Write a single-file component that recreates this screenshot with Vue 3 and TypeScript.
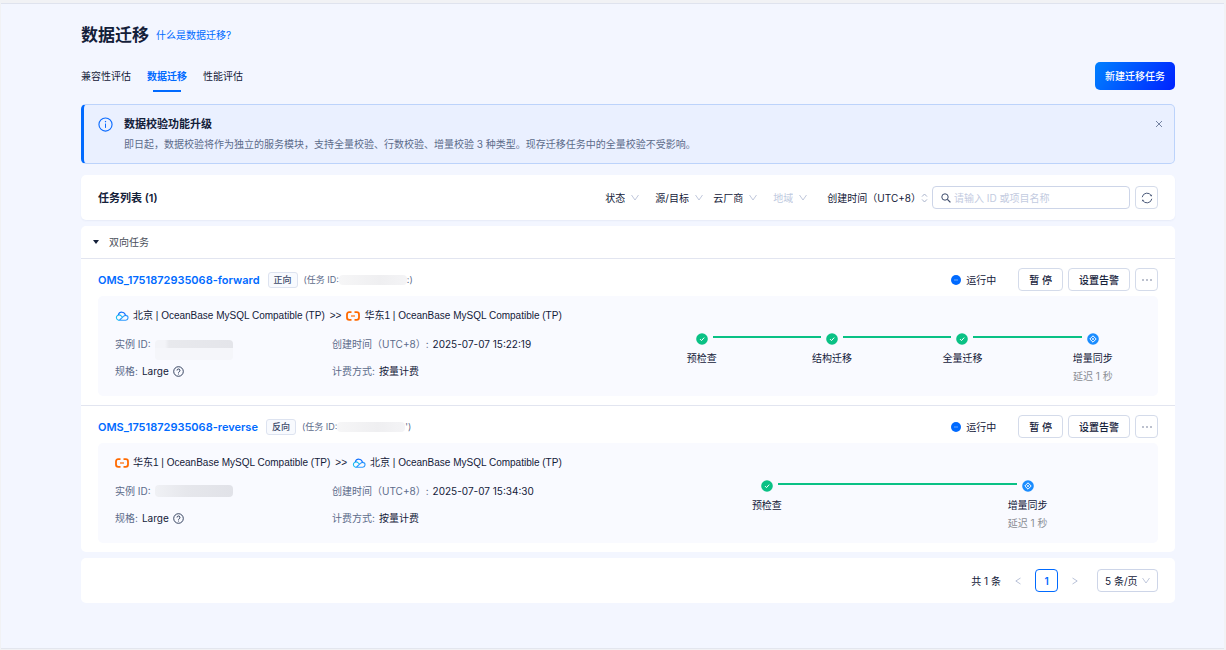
<script setup lang="ts">
import { ref } from 'vue'

interface Step {
  label: string
  done: boolean
  note?: string
}

interface Endpoint {
  cloud: 'tencent' | 'aliyun'
  text: string
}

interface Task {
  name: string
  tag: string
  idTail: string
  maskClass: string
  route: Endpoint[]
  created: string
  steps: Step[]
}

const beijing: Endpoint = { cloud: 'tencent', text: '北京 | OceanBase MySQL Compatible (TP)' }
const huadong: Endpoint = { cloud: 'aliyun', text: '华东1 | OceanBase MySQL Compatible (TP)' }

const tabs = ['兼容性评估', '数据迁移', '性能评估']
const activeTab = ref('数据迁移')
const keyword = ref('')

const filters = [
  { label: '状态', gap: '', disabled: false },
  { label: '源/目标', gap: 'tight', disabled: false },
  { label: '云厂商', gap: '', disabled: false },
  { label: '地域', gap: 'wide', disabled: true },
]

const tasks: Task[] = [
  {
    name: 'OMS_1751872935068-forward',
    tag: '正向',
    idTail: ':)',
    maskClass: 'two-line',
    route: [beijing, huadong],
    created: '2025-07-07 15:22:19',
    steps: [
      { label: '预检查', done: true },
      { label: '结构迁移', done: true },
      { label: '全量迁移', done: true },
      { label: '增量同步', done: false, note: '延迟 1 秒' },
    ],
  },
  {
    name: 'OMS_1751872935068-reverse',
    tag: '反向',
    idTail: '\')',
    maskClass: 'one-line',
    route: [huadong, beijing],
    created: '2025-07-07 15:34:30',
    steps: [
      { label: '预检查', done: true },
      { label: '增量同步', done: false, note: '延迟 1 秒' },
    ],
  },
]
</script>

<template>
  <div class="frame">
    <main class="page">
      <header class="heading">
        <h1>数据迁移</h1>
        <a href="#about">什么是数据迁移?</a>
      </header>

      <div class="tabbar">
        <nav class="tabs">
          <button
            v-for="tab in tabs"
            :key="tab"
            type="button"
            class="tab"
            :class="{ active: tab === activeTab }"
            @click="activeTab = tab"
          >{{ tab }}</button>
        </nav>
        <button type="button" class="primary">新建迁移任务</button>
      </div>

      <section class="notice">
        <svg class="notice-icon" viewBox="0 0 16 16" width="15" height="15" fill="none" stroke="#0b6bff">
          <circle cx="8" cy="8" r="7" stroke-width="1.2" />
          <path d="M8 7v4.6" stroke-width="1.1" />
          <path d="M8 4.2v1.4" stroke-width="1.3" />
        </svg>
        <div class="notice-body">
          <h2>数据校验功能升级</h2>
          <p>即日起，数据校验将作为独立的服务模块，支持全量校验、行数校验、增量校验 3 种类型。现存迁移任务中的全量校验不受影响。</p>
        </div>
        <button type="button" class="close" aria-label="关闭">
          <svg viewBox="0 0 8 8" width="8" height="8" fill="none" stroke="#7584a3"><path d="M1 1l6 6M7 1L1 7" /></svg>
        </button>
      </section>

      <section class="card toolbar">
        <h2>任务列表 (1)</h2>
        <div class="filters">
          <span v-for="f in filters" :key="f.label" class="filter" :class="[f.gap, { disabled: f.disabled }]">
            <select :aria-label="f.label" :disabled="f.disabled"><option>{{ f.label }}</option></select>
            <svg viewBox="0 0 8 7" width="8" height="7" fill="none" stroke="currentColor" stroke-width=".9"><path d="M.5 1L4 6l3.500-5" /></svg>
          </span>
          <button type="button" class="sort">
            <span>创建时间（UTC+8）</span>
            <svg viewBox="0 0 7 10" width="7" height="10" fill="none" stroke="#aab4cc"><path d="M1 3.6L3.5 1 6 3.6M1 6.4L3.5 9 6 6.4" /></svg>
          </button>
        </div>
        <label class="search">
          <svg viewBox="0 0 10 10" width="10" height="10" fill="none" stroke="#3d4b6b"><circle cx="4" cy="4" r="3.2" /><path d="M6.4 6.4L9.4 9.4" stroke-width="1.3" /></svg>
          <input v-model="keyword" type="text" aria-label="搜索任务" placeholder="请输入 ID 或项目名称" />
        </label>
        <button type="button" class="square refresh" aria-label="刷新">
          <svg viewBox="0 0 12 12" width="12" height="12" fill="none" stroke="#4b5a7a">
            <path d="M1.2 5.2a4.9 4.9 0 0 1 9.2-1.4M10.8 6.8a4.9 4.9 0 0 1-9.2 1.4" />
            <path d="M11.2 2.4l-.6 2-1.9-.6zM.8 9.6l.6-2 1.9.6z" fill="#4b5a7a" stroke="none" />
          </svg>
        </button>
      </section>

      <section class="card">
        <button type="button" class="group">
          <svg viewBox="0 0 6 4" width="6" height="4"><path d="M0 0h6L3 4z" fill="#132039" /></svg>
          <span>双向任务</span>
        </button>

        <article v-for="task in tasks" :key="task.name" class="task">
          <header class="task-head">
            <a href="#task" class="task-name">{{ task.name }}</a>
            <span class="tag">{{ task.tag }}</span>
            <span class="task-id">(任务 ID:<i class="mask id-mask"></i>{{ task.idTail }}</span>
            <span class="status">
              <svg viewBox="0 0 10 10" width="10" height="10"><circle cx="5" cy="5" r="5" fill="#006aff" /><path d="M3 5h4" stroke="#6fabff" /></svg>
              运行中
            </span>
            <button type="button" class="plain">暂 停</button>
            <button type="button" class="plain">设置告警</button>
            <button type="button" class="square" aria-label="更多">
              <svg viewBox="0 0 10 2" width="10" height="2" fill="#66738f"><circle cx="1" cy="1" r=".8" /><circle cx="5" cy="1" r=".8" /><circle cx="9" cy="1" r=".8" /></svg>
            </button>
          </header>

          <div class="panel">
            <div class="details">
              <div class="route">
                <template v-for="(end, i) in task.route" :key="end.cloud">
                  <span v-if="i > 0" class="arrow">&gt;&gt;</span>
                  <svg v-if="end.cloud === 'tencent'" viewBox="0 0 28 20" width="14" height="10" fill="none" stroke-width="2.2" stroke-linecap="round">
                    <path d="M8 18.4h13.5a4.9 4.9 0 0 0 .6-9.7c-1.800-.2-3.300.5-4.600 1.700L9.200 18" stroke="#2e9bff" />
                    <path d="M8 18.400a5.300 5.300 0 1 1 3.800-9.100l2.700 2.500" stroke="#16bdf0" />
                    <path d="M6.600 7.600a7.300 7.300 0 0 1 14.200.8" stroke="#1373ff" />
                  </svg>
                  <svg v-else viewBox="0 0 28 20" width="14" height="10" fill="none" stroke="#ff6a00">
                    <path d="M11 2.400H6.500Q2 2.400 2 7v6q0 4.600 4.500 4.600H11M17 2.400h4.500Q26 2.400 26 7v6q0 4.600-4.500 4.600H17" stroke-width="3.600" />
                    <path d="M10 10h8" stroke-width="2.400" />
                  </svg>
                  <span>{{ end.text }}</span>
                </template>
              </div>
              <dl class="facts">
                <div class="fact"><dt>实例 ID:</dt><dd><i class="mask instance-mask" :class="task.maskClass"></i></dd></div>
                <div class="fact"><dt>创建时间（UTC+8）:</dt><dd>{{ task.created }}</dd></div>
                <div class="fact">
                  <dt>规格:</dt>
                  <dd>
                    Large
                    <svg viewBox="0 0 11 11" width="11" height="11" fill="none" stroke="#233150">
                      <circle cx="5.500" cy="5.500" r="4.800" stroke-width=".9" />
                      <path d="M4 4.500a1.500 1.500 0 1 1 2.200 1.300c-.5.300-.7.500-.7 1M5.500 7.600v.9" stroke-width=".9" />
                    </svg>
                  </dd>
                </div>
                <div class="fact"><dt>计费方式:</dt><dd>按量计费</dd></div>
              </dl>
            </div>

            <ol class="steps">
              <li v-for="step in task.steps" :key="step.label" class="step">
                <svg v-if="step.done" viewBox="0 0 12 12" width="12" height="12" fill="none"><circle cx="6" cy="6" r="5.800" fill="#0ac185" /><path d="M4 6.100l1.500 1.500L8.200 4.600" stroke="#fff" stroke-width="1" /></svg>
                <svg v-else viewBox="0 0 12 12" width="12" height="12" fill="none">
                  <circle cx="6" cy="6" r="5.800" fill="#1a8cff" />
                  <path d="M6 2.800L9.200 6 6 9.200 2.800 6z" stroke="#fff" stroke-width="1" />
                  <circle cx="6" cy="6" r=".9" fill="#fff" />
                </svg>
                <span class="step-label">{{ step.label }}</span>
                <span v-if="step.note" class="step-note">{{ step.note }}</span>
              </li>
            </ol>
          </div>
        </article>
      </section>

      <footer class="card pager">
        <span class="total">共 1 条</span>
        <button type="button" class="turn" aria-label="上一页"><svg viewBox="0 0 6 8" width="6" height="8" fill="none" stroke="#b9c2d8"><path d="M5.500 1L.8 4l4.700 3" /></svg></button>
        <button type="button" class="current">1</button>
        <button type="button" class="turn" aria-label="下一页"><svg viewBox="0 0 6 8" width="6" height="8" fill="none" stroke="#b9c2d8"><path d="M.5 1l4.700 3L.5 7" /></svg></button>
        <span class="page-size">
          <select aria-label="每页条数"><option>5 条/页</option></select>
          <svg viewBox="0 0 8 7" width="8" height="7" fill="none" stroke="#b9c2d8" stroke-width=".9"><path d="M.5 1L4 6l3.500-5" /></svg>
        </span>
      </footer>
    </main>
  </div>
</template>

<style>
body {
  margin: 0;
}
</style>

<style scoped>
.frame {
  box-sizing: border-box;
  min-height: 100vh;
  display: flex;
  padding: 3px 2px 1px 1px;
  background: #f1f2f5;
  color: #132039;
  font-family: Inter, "Noto Sans CJK SC", sans-serif;
  font-size: 10px;
  line-height: 16px;
}

.page {
  flex: 1;
  min-width: 0;
  box-sizing: border-box;
  padding: 18px 49px 40px 80px;
  border-top: 1px solid #dfe3ee;
  border-bottom: 1px solid #e3e6ee;
  background: #f3f6ff;
}

h1,
h2,
p,
dl,
dd,
ol {
  margin: 0;
  padding: 0;
}

button,
input,
select {
  box-sizing: border-box;
  margin: 0;
  padding: 0;
  border: 0;
  background: none;
  color: inherit;
  font: inherit;
  appearance: none;
  outline: none;
}

button {
  cursor: pointer;
}

a {
  color: #006aff;
  text-decoration: none;
}

svg {
  display: block;
  flex: none;
}

.heading {
  display: flex;
  align-items: center;
  gap: 7px;
  height: 26px;
}

.heading h1 {
  font-size: 17px;
  line-height: 26px;
  font-weight: 600;
}

.tabbar {
  display: flex;
  justify-content: space-between;
  align-items: center;
  height: 28px;
  margin: 14px 0;
}

.tabs {
  display: flex;
  gap: 16px;
}

.tab {
  position: relative;
  height: 28px;
}

.tab.active {
  color: #006aff;
  font-weight: 700;
}

.tab.active::after {
  content: "";
  position: absolute;
  right: 6px;
  bottom: -2px;
  left: 6px;
  height: 2px;
  background: #006aff;
}

.primary {
  height: 28px;
  padding: 0 10px;
  border-radius: 5px;
  background: linear-gradient(120deg, #0080ff, #0022ff);
  color: #fff;
  font-weight: 500;
}

.notice {
  display: flex;
  align-items: flex-start;
  padding: 11px 11px 11px 14px;
  border: 1px solid #bcd3fb;
  border-left: 3px solid #006aff;
  border-radius: 5px;
  background: #eaf0ff;
}

.notice-icon {
  margin-top: 1px;
}

.notice-body {
  flex: 1;
  margin-left: 11px;
  color: #5c6b8a;
}

.notice-body h2 {
  margin-bottom: 4px;
  color: #132039;
  font-size: 11px;
  line-height: 16px;
  font-weight: 600;
}

.close {
  padding: 4px 0;
}

.card {
  margin-top: 6px;
  border-radius: 5px;
  background: #fff;
}

.toolbar {
  display: flex;
  align-items: center;
  height: 45px;
  box-sizing: border-box;
  margin-top: 11px;
  padding: 0 17px;
  box-shadow: 0 1px 2px rgba(40, 70, 140, 0.06);
}

.toolbar h2 {
  flex: 1;
  font-size: 11px;
  font-weight: 600;
}

.filters {
  display: flex;
  align-items: center;
}

.filter {
  display: flex;
  align-items: center;
  gap: 6px;
  margin-right: 16px;
}

.filter.tight {
  margin-right: 10px;
}

.filter.wide {
  margin-right: 20px;
}

.filter svg {
  color: #b9c2d8;
}

.filter.disabled,
.filter select:disabled {
  color: #c0cae0;
  opacity: 1;
}

.sort {
  display: flex;
  align-items: center;
}

.search {
  display: flex;
  align-items: center;
  gap: 3px;
  width: 198px;
  height: 23px;
  box-sizing: border-box;
  margin-left: 4px;
  padding: 0 8px;
  border: 1px solid #cdd5e8;
  border-radius: 4px;
}

.search input {
  flex: 1;
  min-width: 0;
}

.search input::placeholder {
  color: #c3cbdf;
}

.plain,
.square {
  height: 23px;
  border: 1px solid #d4dbea;
  border-radius: 4px;
  background: #fff;
}

.plain {
  margin-right: 5px;
  padding: 0 10px;
  font-weight: 500;
}

.square {
  display: flex;
  align-items: center;
  justify-content: center;
  width: 23px;
}

.refresh {
  margin-left: 5px;
}

.group {
  display: flex;
  align-items: center;
  gap: 10px;
  width: 100%;
  height: 32px;
  padding: 0 12px;
  color: #4a4f5a;
}

.task {
  padding: 9px 17px;
  border-top: 1px solid #e2e5f0;
}

.task-head {
  display: flex;
  align-items: center;
  margin-bottom: 5px;
}

.task-name {
  font-size: 11px;
  font-weight: 600;
}

.tag {
  margin: 0 6px 0 8px;
  padding: 0 5px;
  border: 1px solid #dde3f0;
  border-radius: 3px;
  background: #f8fafe;
  color: #3d4b6b;
  font-size: 9px;
  line-height: 14px;
  font-weight: 500;
}

.task-id {
  display: flex;
  align-items: center;
  flex: 1;
  color: #5c6b8a;
  font-size: 9px;
}

.mask {
  display: block;
  border-radius: 4px;
}

.id-mask {
  width: 68px;
  height: 10px;
  background: linear-gradient(90deg, #f6f6f7, #efeff1 60%, #f4f4f6);
}

.instance-mask {
  width: 78px;
}

.instance-mask.one-line {
  height: 12px;
  background: linear-gradient(90deg, #f0f1f5, #e6e7ec 40%, #e1e2e8);
}

.instance-mask.two-line {
  height: 20px;
  margin: 4px 0 -8px;
  background: linear-gradient(90deg, #f3f4f8 10px, #e8e9ed 14px, #e4e5ea) 0 0 / 100% 8px no-repeat #f5f6fa;
}

.status {
  display: flex;
  align-items: center;
  gap: 5px;
  margin-right: 22px;
}

.panel {
  display: flex;
  height: 100px;
  box-sizing: border-box;
  padding-left: 17px;
  border-radius: 5px;
  background: #f9faff;
}

.details {
  flex: 522;
  padding-top: 12px;
}

.route {
  display: flex;
  align-items: center;
  gap: 4px;
  font-family: "Liberation Sans", "Noto Sans CJK SC", sans-serif;
}

.arrow {
  margin: 0 1px;
}

.facts {
  display: grid;
  grid-template-columns: 217px 1fr;
  grid-auto-rows: 16px;
  row-gap: 11px;
  margin-top: 12px;
}

.fact,
.fact dd {
  display: flex;
  align-items: center;
  gap: 4px;
}

.fact dt {
  color: #5c6b8a;
}

.steps {
  flex: 522;
  display: flex;
  list-style: none;
  padding-top: 37px;
}

.step {
  position: relative;
  flex: 1;
  display: flex;
  flex-direction: column;
  align-items: center;
}

.step:not(:last-child)::after {
  content: "";
  position: absolute;
  top: 3px;
  left: calc(50% + 11px);
  width: calc(100% - 22px);
  height: 2px;
  background: #0ac185;
}

.step-label {
  margin-top: 5px;
}

.step-note {
  margin-top: 2px;
  color: #8a8d94;
}

.pager {
  display: flex;
  align-items: center;
  justify-content: flex-end;
  height: 45px;
  box-sizing: border-box;
  padding: 0 17px;
}

.turn {
  display: flex;
  align-items: center;
  justify-content: center;
  width: 34px;
  height: 23px;
}

.current {
  width: 23px;
  height: 23px;
  border: 1px solid #006aff;
  border-radius: 4px;
  color: #006aff;
  font-weight: 600;
}

.page-size {
  display: flex;
  align-items: center;
  gap: 4px;
  height: 23px;
  box-sizing: border-box;
  margin-left: 5px;
  padding: 0 7px;
  border: 1px solid #cdd5e8;
  border-radius: 4px;
}
</style>
